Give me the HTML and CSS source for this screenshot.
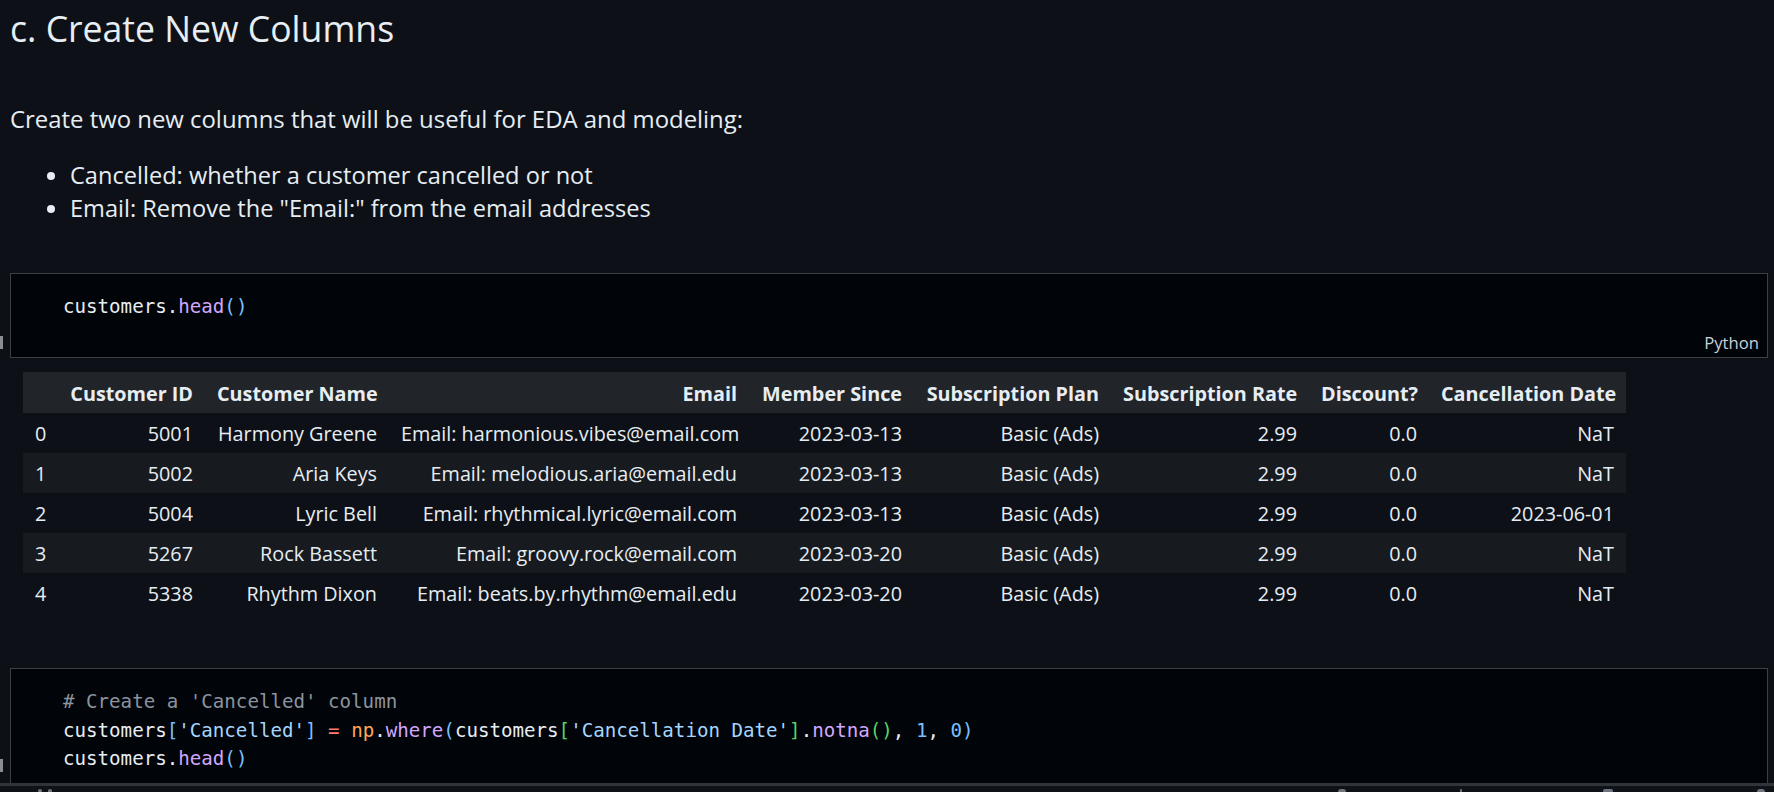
FILE: index.html
```html
<!DOCTYPE html>
<html lang="en">
<head>
<meta charset="utf-8">
<title>Notebook</title>
<link rel="stylesheet" href="styles.css">
</head>
<body>
<div class="app">
  <main class="notebook">
    <section class="md">
      <h2>c. Create New Columns</h2>
      <p>Create two new columns that will be useful for EDA and modeling:</p>
      <ul>
        <li>Cancelled: whether a customer cancelled or not</li>
        <li>Email: Remove the "Email:" from the email addresses</li>
      </ul>
    </section>

    <div class="cell-row first">
      <div class="gutter"><div class="marker m1"></div></div>
      <div class="cell">
        <pre class="code"><span class="v">customers</span>.<span class="fn">head</span><span class="b1">()</span></pre>
        <div class="cell-foot"><span class="lang">Python</span></div>
      </div>
    </div>

    <div class="output">
      <table class="df">
        <colgroup>
          <col class="c0"><col class="c1"><col class="c2"><col class="c3"><col class="c4"><col class="c5"><col class="c6"><col class="c7"><col class="c8">
        </colgroup>
        <thead>
          <tr><th></th><th>Customer ID</th><th>Customer Name</th><th>Email</th><th>Member Since</th><th>Subscription Plan</th><th>Subscription Rate</th><th>Discount?</th><th>Cancellation Date</th></tr>
        </thead>
        <tbody>
          <tr><td class="idx">0</td><td>5001</td><td>Harmony Greene</td><td>Email: harmonious.vibes@email.com</td><td>2023-03-13</td><td>Basic (Ads)</td><td>2.99</td><td>0.0</td><td>NaT</td></tr>
          <tr><td class="idx">1</td><td>5002</td><td>Aria Keys</td><td>Email: melodious.aria@email.edu</td><td>2023-03-13</td><td>Basic (Ads)</td><td>2.99</td><td>0.0</td><td>NaT</td></tr>
          <tr><td class="idx">2</td><td>5004</td><td>Lyric Bell</td><td>Email: rhythmical.lyric@email.com</td><td>2023-03-13</td><td>Basic (Ads)</td><td>2.99</td><td>0.0</td><td>2023-06-01</td></tr>
          <tr><td class="idx">3</td><td>5267</td><td>Rock Bassett</td><td>Email: groovy.rock@email.com</td><td>2023-03-20</td><td>Basic (Ads)</td><td>2.99</td><td>0.0</td><td>NaT</td></tr>
          <tr><td class="idx">4</td><td>5338</td><td>Rhythm Dixon</td><td>Email: beats.by.rhythm@email.edu</td><td>2023-03-20</td><td>Basic (Ads)</td><td>2.99</td><td>0.0</td><td>NaT</td></tr>
        </tbody>
      </table>
    </div>

    <div class="cell-row second">
      <div class="gutter"><div class="marker m2"></div></div>
      <div class="cell tall">
        <pre class="code"><span class="cm"># Create a 'Cancelled' column</span>
<span class="v">customers</span><span class="b1">[</span><span class="s">'Cancelled'</span><span class="b1">]</span> <span class="op">=</span> <span class="mod">np</span>.<span class="fn">where</span><span class="b1">(</span><span class="v">customers</span><span class="b2">[</span><span class="s">'Cancellation Date'</span><span class="b2">]</span>.<span class="fn">notna</span><span class="b2">()</span>, <span class="n">1</span>, <span class="n">0</span><span class="b1">)</span>
<span class="v">customers</span>.<span class="fn">head</span><span class="b1">()</span></pre>
      </div>
    </div>
  </main>

  <div class="bottom">
    <span class="bi d1"></span>
    <span class="bi d2"></span>
    <span class="bi i1"></span>
    <span class="bi i2"></span>
    <span class="bi i3"></span>
    <span class="bi i4"></span>
  </div>
</div>
</body>
</html>
```

FILE: styles.css
```css
html, body {
  margin: 0;
  padding: 0;
  background: #0d1117;
  overflow: hidden;
}

.app {
  display: flex;
  flex-direction: column;
  height: 792px;
  color: #e6edf3;
  font-family: "Open Sans", "Noto Sans", sans-serif;
}

.notebook {
  flex: 1;
  min-height: 0;
  overflow: hidden;
  padding-right: 6px;
}

/* markdown */
.md {
  padding: 5px 0 0 10px;
}

.md h2 {
  margin: 0;
  font-size: 35.6px;
  font-weight: 400;
  line-height: 46px;
  color: #e6edf3;
}

.md p {
  margin: 51px 0 0;
  font-size: 23.9px;
  line-height: 33px;
}

.md ul {
  margin: 24px 0 0;
  padding-left: 60px;
  font-size: 23.6px;
  line-height: 33px;
}

/* code cells */
.cell-row {
  display: flex;
}

.cell-row.first {
  margin-top: 48px;
}

.cell-row.second {
  margin-top: 55px;
}

.gutter {
  width: 10px;
  flex: none;
}

.marker {
  width: 3px;
  height: 13px;
  background: #8a8d93;
}

.m1 { margin-top: 63px; }
.m2 { margin-top: 91px; }

.cell {
  flex: 1;
  min-width: 0;
  border: 1px solid #3b3f46;
  background: #010409;
}

.cell.tall {
  min-height: 150px;
}

.code {
  margin: 0;
  padding: 19px 0 0 52px;
  font-family: "DejaVu Sans Mono", "Liberation Mono", monospace;
  font-size: 19.15px;
  line-height: 28.5px;
  color: #e6edf3;
  white-space: pre;
}

.cell-foot {
  height: 35.5px;
  display: flex;
  align-items: flex-end;
  justify-content: flex-end;
  padding: 0 8px 4px 0;
  box-sizing: border-box;
}

.lang {
  font-size: 16.7px;
  line-height: 20px;
  color: #c9d1d9;
}

.v { color: #e6edf3; }
.fn { color: #d2a8ff; }
.b1 { color: #79c0ff; }
.b2 { color: #56d364; }
.s { color: #a5d6ff; }
.op { color: #ff7b72; }
.mod { color: #ffa657; }
.n { color: #79c0ff; }
.cm { color: #8b949e; }

/* dataframe output */
.output {
  margin-top: 14px;
  padding-left: 23px;
}

.df {
  table-layout: fixed;
  width: 1603px;
  border-collapse: collapse;
  border-spacing: 0;
  font-size: 19.8px;
  color: #e6edf3;
}

.c0 { width: 35px; }
.c1 { width: 147px; }
.c2 { width: 184px; }
.c3 { width: 360px; }
.c4 { width: 165px; }
.c5 { width: 197px; }
.c6 { width: 198px; }
.c7 { width: 120px; }
.c8 { width: 197px; }

.df th,
.df td {
  padding: 9px 12px 7px;
  line-height: 24px;
  text-align: right;
  white-space: nowrap;
  overflow: hidden;
}

.df thead tr {
  background: #212429;
}

.df th {
  font-weight: 700;
  padding-top: 9.5px;
  padding-bottom: 7.5px;
}

.df tbody tr:nth-child(even) {
  background: #171a1f;
}

.df td.idx {
  text-align: left;
}

/* bottom strip */
.bottom {
  flex: none;
  height: 9px;
  box-sizing: border-box;
  border-top: 3px solid #30343b;
  background: #0f1217;
  display: flex;
  align-items: flex-start;
}

.bi {
  display: block;
  height: 3px;
  margin-top: 3px;
  background: #6e7681;
  border-radius: 2px 2px 0 0;
}

.d1 { width: 4px; margin-left: 38px; }
.d2 { width: 4px; margin-left: 6px; }
.i1 { width: 8px; margin-left: 1286px; border-radius: 4px 4px 0 0; }
.i2 { width: 2px; margin-left: 114px; }
.i3 { width: 10px; margin-left: 141px; }
.i4 { width: 8px; margin-left: 144px; border-radius: 4px 4px 0 0; }
```
